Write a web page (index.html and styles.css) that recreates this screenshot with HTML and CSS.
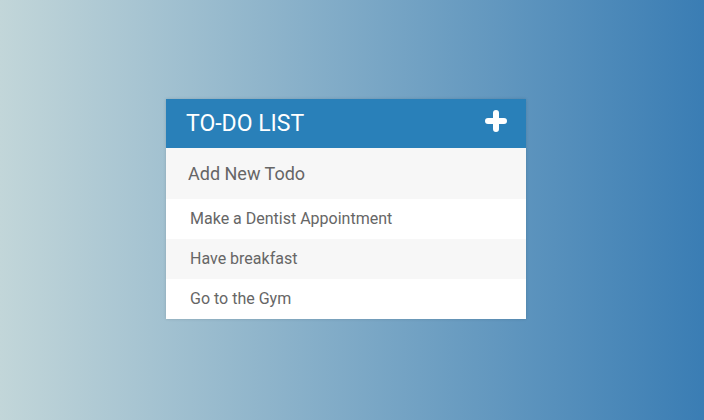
FILE: index.html
```html
<!DOCTYPE html>
<html>
<head>
<meta charset="utf-8">
<link rel="stylesheet" href="styles.css">
</head>
<body>
<div class="card">
  <h1 class="header">TO-DO LIST
    <svg class="plus" width="22" height="22" viewBox="0 0 22 22"><path d="M11 3v16M3 11h16" stroke="#fff" stroke-width="6" stroke-linecap="round" fill="none"/></svg>
  </h1>
  <input class="new" type="text" placeholder="Add New Todo">
  <ul class="list">
    <li>Make a Dentist Appointment</li>
    <li>Have breakfast</li>
    <li>Go to the Gym</li>
  </ul>
</div>
</body>
</html>
```
FILE: styles.css
```css
html, body { margin: 0; height: 100%; }
body {
  background: linear-gradient(to right, #c2d6d9, #3a7db4);
  font-family: Roboto, "Open Sans", sans-serif;
  padding: 99px 0 0 166px;
  box-sizing: border-box;
}
.card {
  width: 360px;
  background: #fff;
  box-shadow: 0 0 3px rgba(0,0,0,0.15);
}
.header {
  margin: 0;
  height: 49px;
  background: #2980b9;
  color: #fff;
  font-weight: 400;
  font-size: 23px;
  padding: 0 19px 0 20px;
  display: flex;
  align-items: center;
  justify-content: space-between;
  box-sizing: border-box;
}
.plus { margin-top: -5px; }
.new {
  display: block;
  width: 100%;
  height: 51px;
  box-sizing: border-box;
  border: 0;
  background: #f7f7f7;
  padding: 0 22px;
  font-family: Roboto, sans-serif;
  font-size: 18px;
  outline: none;
  margin: 0;
}
.new::placeholder { color: #666; }
.list { list-style: none; margin: 0; padding: 0; }
.list li {
  height: 40px;
  line-height: 40px;
  padding-left: 24px;
  font-size: 16px;
  color: #666;
}
.list li:nth-child(2n) { background: #f7f7f7; }
```
